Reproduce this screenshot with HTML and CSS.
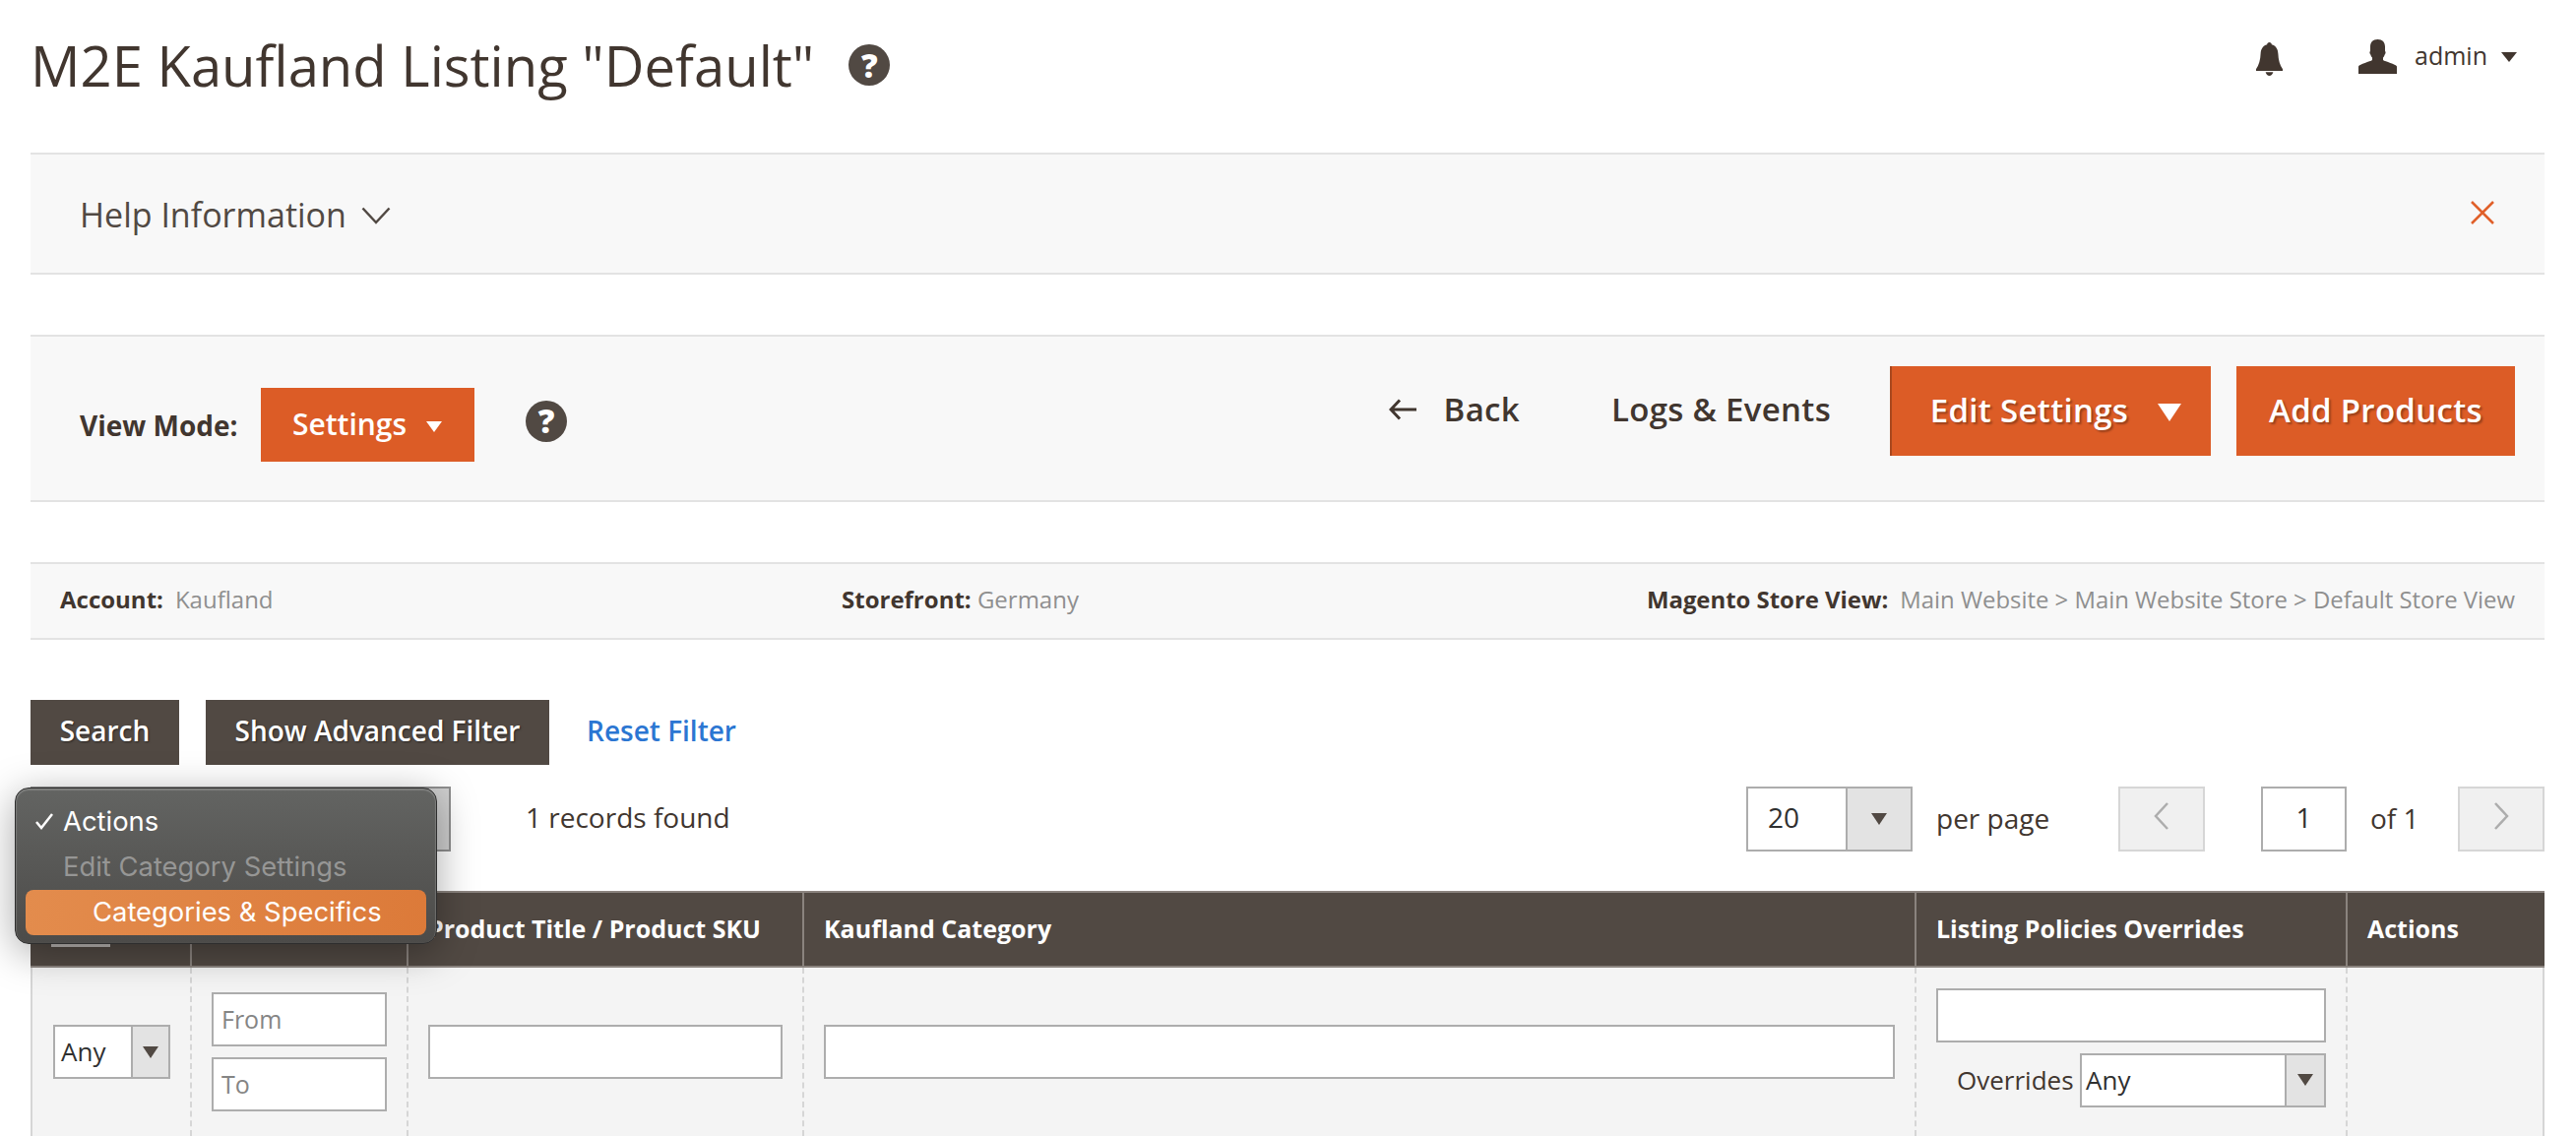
FILE: index.html
```html
<!DOCTYPE html>
<html lang="en">
<head>
<meta charset="utf-8">
<title>M2E Kaufland Listing</title>
<link rel="stylesheet" href="styles.css">
</head>
<body>
<div class="page">
  <header class="top">
    <div class="title-wrap">
      <h1 class="title">M2E Kaufland Listing "Default"</h1>
      <span class="help help-title">?</span>
    </div>
    <div class="top-actions">
      <svg class="bell" viewBox="0 0 30 35"><path d="M15 0c1.400 0 2.400 1 2.400 2.200 4.600 1.200 6.600 5 6.800 9.600.2 6.300 1.800 12.200 4.800 16.200v1.800H1v-1.800c3-4 4.600-9.900 4.800-16.200.2-4.600 2.200-8.400 6.800-9.600C12.600 1 13.600 0 15 0zM11 31.200h8c-.6 2.200-2.200 3.800-4 3.800s-3.400-1.600-4-3.800z"/></svg>
      <svg class="user" viewBox="0 0 39 35"><path d="M19.500 0c5 0 7.500 3 7.500 7.500v4.500c.8.400.8 2 0 3-.6 1-.8 2.500-2 3.500v2.500c2 1.600 13 4 14 6.500V35H0v-7.500c1-2.500 12-4.900 14-6.500v-2.500c-1.200-1-1.400-2.500-2-3.500-.8-1-.8-2.600 0-3V7.500C12 3 14.500 0 19.500 0z"/></svg>
      <span class="admin">admin</span>
      <span class="caret caret-dark"></span>
    </div>
  </header>

  <section class="help-panel">
    <div class="help-label">Help Information
      <svg class="chev" viewBox="0 0 30 18"><path d="M1.500 1.500L15 16 28.500 1.500"/></svg>
    </div>
    <svg class="close" viewBox="0 0 24 24"><path d="M1 1l22 22M23 1L1 23"/></svg>
  </section>

  <section class="toolbar">
    <div class="toolbar-left">
      <span class="view-label">View Mode:</span>
      <button class="btn-view">Settings<span class="caret caret-small"></span></button>
      <span class="help help-view">?</span>
    </div>
    <div class="toolbar-right">
      <a class="tool-link back"><svg class="arrow" viewBox="0 0 28 22"><path d="M11 1.500L2 11l9 9.500M2 11h26"/></svg>Back</a>
      <a class="tool-link logs">Logs &amp; Events</a>
      <button class="btn-primary edit">Edit Settings<span class="caret caret-big"></span></button>
      <button class="btn-primary add">Add Products</button>
    </div>
  </section>

  <section class="info">
    <div class="info-item info-account"><b>Account:</b><span class="info-val">Kaufland</span></div>
    <div class="info-item info-store"><b>Storefront:</b> <span>Germany</span></div>
    <div class="info-item info-view"><b>Magento Store View:</b><span class="info-val">Main Website &gt; Main Website Store &gt; Default Store View</span></div>
  </section>

  <section class="filters">
    <button class="btn-dark btn-search">Search</button>
    <button class="btn-dark btn-adv">Show Advanced Filter</button>
    <a class="reset">Reset Filter</a>
  </section>

  <section class="massbar">
    <div class="mass-select"></div>
    <span class="records">1 records found</span>
    <div class="pager">
      <div class="select sel-pager"><span class="sel-val">20</span><span class="sel-arrow"><i class="tri"></i></span></div>
      <span class="per-page">per page</span>
      <div class="page-btn"><svg viewBox="0 0 16 28"><path d="M14 1L2 14l12 13"/></svg></div>
      <div class="page-input">1</div>
      <span class="of">of 1</span>
      <div class="page-btn"><svg viewBox="0 0 16 28"><path d="M2 1l12 13L2 27"/></svg></div>
    </div>
  </section>

  <section class="grid">
    <div class="th th-check"><span class="check-mark"></span></div>
    <div class="th"></div>
    <div class="th th-title">Product Title / Product SKU</div>
    <div class="th">Kaufland Category</div>
    <div class="th">Listing Policies Overrides</div>
    <div class="th th-last">Actions</div>

    <div class="td td-first">
      <div class="select sel-any"><span class="sel-val">Any</span><span class="sel-arrow"><i class="tri"></i></span></div>
    </div>
    <div class="td td-range">
      <div class="input placeholder">From</div>
      <div class="input placeholder">To</div>
    </div>
    <div class="td"><div class="input"></div></div>
    <div class="td"><div class="input"></div></div>
    <div class="td td-policy">
      <div class="input"></div>
      <div class="over-row">
        <span class="over-label">Overrides</span>
        <div class="select sel-over"><span class="sel-val">Any</span><span class="sel-arrow"><i class="tri"></i></span></div>
      </div>
    </div>
    <div class="td td-last"></div>
  </section>
</div>

<div class="menu">
  <div class="menu-item"><svg class="tick" viewBox="0 0 20 18"><path d="M2 10l5 6L18 2"/></svg>Actions</div>
  <div class="menu-item disabled">Edit Category Settings</div>
  <div class="menu-item active">Categories &amp; Specifics</div>
</div>
</body>
</html>
```
FILE: styles.css
```css
* { box-sizing: border-box; }
html, body { margin: 0; height: 100%; overflow: hidden; background: #fff; }
body { font-family: "Open Sans", sans-serif; color: #41362f; position: relative; }
button { font-family: inherit; border: 0; padding: 0; cursor: pointer; }

.page { padding: 0 32px 0 31px; height: 1154px; overflow: hidden; }

.top { height: 155px; display: flex; justify-content: space-between; align-items: flex-start; }
.title-wrap { display: flex; align-items: center; padding-top: 24px; }
.title { margin: 0; font-size: 56.2px; font-weight: 400; line-height: 84px; height: 84px; white-space: nowrap; }
.help { display: flex; align-items: center; justify-content: center; border-radius: 50%; background: #514943; color: #fff; font-weight: 800; flex: none; }
.help-title { width: 42px; height: 42px; font-size: 33px; margin-left: 35px; margin-top: 0; }

.top-actions { display: flex; align-items: center; margin-top: 36px; padding-right: 28px; }
.bell { width: 29px; height: 34px; fill: #41362f; margin-right: 76px; margin-top: 7px; }
.user { width: 39px; height: 35px; fill: #41362f; margin-right: 18px; margin-top: 2px; }
.admin { font-size: 25px; line-height: 35px; }
.caret { display: inline-block; width: 0; height: 0; border-style: solid; border-color: transparent; }
.caret-dark { border-width: 10px 8px 0; border-top-color: #41362f; margin-left: 14px; margin-top: 2px; }

.help-panel { height: 124px; background: #f8f8f8; border-top: 2px solid #e3e3e3; border-bottom: 2px solid #e3e3e3; display: flex; align-items: center; justify-content: space-between; padding: 0 51px 0 50px; }
.help-label { font-size: 34px; display: flex; align-items: center; gap: 15px; color: #514943; margin-top: 1px; }
.chev { width: 30px; height: 18px; fill: none; stroke: #514943; stroke-width: 2.500; margin-top: 3px; }
.close { width: 24px; height: 24px; fill: none; stroke: #e0602a; stroke-width: 2.500; margin-top: -3px; }

.toolbar { height: 170px; margin-top: 61px; background: #f8f8f8; border-top: 2px solid #e3e3e3; border-bottom: 2px solid #e3e3e3; display: flex; justify-content: space-between; padding: 30px 30px 0 50px; }
.toolbar-left { display: flex; align-items: center; margin-top: 22px; height: 75px; }
.view-label { font-size: 28px; font-weight: 700; width: 184px; white-space: nowrap; }
.btn-view { width: 217px; height: 75px; background: #dc5c26; color: #fff; font-size: 30px; font-weight: 600; display: flex; align-items: center; justify-content: center; gap: 20px; padding: 0 1px 2px 0; }
.caret-small { border-width: 11px 8px 0; border-top-color: #fff; margin-top: 5px; }
.help-view { width: 42px; height: 42px; font-size: 33px; margin-left: 52px; margin-top: -8px; }

.toolbar-right { display: flex; align-items: flex-start; }
.tool-link { font-size: 33px; font-weight: 600; color: #41362f; line-height: 88px; white-space: nowrap; display: flex; align-items: center; letter-spacing: .3px; }
.arrow { width: 28px; height: 22px; fill: none; stroke: #41362f; stroke-width: 3; margin-right: 28px; }
.back { margin-right: 93px; }
.logs { margin-right: 60px; }
.btn-primary { height: 91px; background: #dc5c26; color: #fff; font-size: 33px; font-weight: 600; text-shadow: 2px 2px 2px rgba(0,0,0,.3); white-space: nowrap; display: flex; align-items: center; justify-content: center; letter-spacing: .3px; padding-bottom: 3px; }
.edit { width: 326px; gap: 30px; margin-right: 26px; border-left: 2px solid #a9481e; padding-left: 9px; }
.add { width: 283px; }
.caret-big { border-width: 18px 12px 0; border-top-color: #fff; margin-top: 6px; }

.info { height: 79px; margin-top: 61px; background: #f8f8f8; border-top: 2px solid #e3e3e3; border-bottom: 2px solid #e3e3e3; display: flex; justify-content: space-between; align-items: center; padding: 0 30px 4px; font-size: 24px; color: #8f8f8f; white-space: nowrap; position: relative; }
.info b { color: #41362f; font-weight: 700; }
.info-val { margin-left: 12px; }
.info-item { flex: none; }
.info-account { width: 794px; }
.info-store { flex: 1; }
.info-view { font-size: 23.9px; }

.filters { display: flex; align-items: center; margin-top: 61px; height: 66px; }
.btn-dark { height: 66px; background: #514943; color: #fff; font-size: 28px; font-weight: 600; text-shadow: 1px 1px 2px rgba(0,0,0,.5); white-space: nowrap; padding-bottom: 4px; }
.btn-search { width: 151px; margin-right: 27px; }
.btn-adv { width: 349px; margin-right: 38px; }
.reset { color: #2b76d2; font-size: 28px; font-weight: 600; margin-top: -4px; }

.massbar { display: flex; align-items: center; margin-top: 22px; height: 66px; position: relative; }
.mass-select { width: 427px; height: 66px; background: #cfcfcf; border: 2px solid #8f8f8f; margin-right: 76px; }
.records { font-size: 28px; white-space: nowrap; margin-top: -4px; }
.pager { display: flex; align-items: center; margin-left: auto; }
.select { display: flex; background: #fff; border: 2px solid #adadad; }
.sel-val { flex: 1; color: #303030; }
.sel-arrow { background: #e3e3e3; border-left: 2px solid #adadad; display: flex; align-items: center; justify-content: center; flex: none; }
.tri { width: 0; height: 0; border-style: solid; border-color: transparent; border-top-color: #514943; border-width: 12px 8px 0; display: block; }
.sel-pager { width: 169px; height: 66px; font-size: 28px; align-items: stretch; }
.sel-pager .sel-val { padding-left: 20px; line-height: 58px; }
.sel-pager .sel-arrow { width: 66px; }
.per-page { font-size: 28px; margin-left: 24px; width: 185px; white-space: nowrap; margin-top: -3px; }
.page-btn { width: 88px; height: 66px; background: #f0f0f0; border: 2px solid #d6d6d6; display: flex; align-items: center; justify-content: center; }
.page-btn svg { width: 16px; height: 28px; fill: none; stroke: #adadad; stroke-width: 2.500; margin-top: -6px; }
.page-input { width: 87px; height: 66px; margin-left: 57px; border: 2px solid #adadad; background: #fff; font-size: 28px; color: #303030; text-align: center; line-height: 58px; }
.of { font-size: 28px; margin-left: 24px; width: 89px; white-space: nowrap; margin-top: -3px; }

.grid { display: grid; grid-template-columns: 164px 220px 402px 1130px 438px 200px; margin-top: 40px; }
.th { height: 78px; background: #514943; border-top: 2px solid #8a837e; border-bottom: 2px solid #8a837e; border-right: 2px solid #8a837e; color: #fff; font-size: 25px; font-weight: 700; display: flex; align-items: center; padding: 0 0 2px 20px; white-space: nowrap; }
.th-last { border-right: 0; }
.th-check { position: relative; }
.check-mark { position: absolute; left: 21px; top: 52px; width: 60px; height: 3px; background: #b9b5b2; }
.td { background: #f4f4f4; height: 171px; padding: 0 20px; border-right: 2px dashed #d6d6d6; display: flex; flex-direction: column; justify-content: center; }
.td-first { border-left: 2px solid #d6d6d6; padding-left: 21px; }
.td-last { border-right: 2px solid #d6d6d6; }
.td .input { height: 55px; background: #fff; border: 2px solid #adadad; }
.td-range { gap: 11px; }
.placeholder { font-size: 25px; color: #858585; padding-left: 8px; line-height: 51px; }
.td-policy { gap: 11px; padding-bottom: 9px; }
.over-row { display: flex; align-items: center; padding-left: 21px; height: 55px; }
.over-label { font-size: 26px; width: 125px; white-space: nowrap; }
.sel-any { width: 119px; height: 55px; font-size: 26px; }
.sel-any .sel-val { padding-left: 6px; line-height: 50px; }
.sel-any .sel-arrow { width: 38px; }
.sel-over { width: 250px; height: 55px; font-size: 26px; }
.sel-over .sel-val { padding-left: 4px; line-height: 51px; }
.sel-over .sel-arrow { width: 40px; }

.menu { position: absolute; left: 15px; top: 800px; width: 429px; height: 159px; border-radius: 14px; border: 1px solid #2e2e2e; background: linear-gradient(#636462, #4c4b49); box-shadow: inset 0 1px 1px 1px rgba(255,255,255,.18), 0 8px 40px rgba(0,0,0,.35); padding: 11px 10px 0; font-family: Inter, sans-serif; font-size: 27.400px; color: #fff; }
.menu-item { height: 46px; line-height: 44px; padding-left: 38px; white-space: nowrap; position: relative; }
.disabled { color: #969695; }
.active { background: linear-gradient(100deg, #e38c4d, #dc7a39); border-radius: 8px; padding-left: 68px; }
.tick { position: absolute; left: 9px; top: 13px; width: 20px; height: 18px; fill: none; stroke: #fff; stroke-width: 2.500; }
```
